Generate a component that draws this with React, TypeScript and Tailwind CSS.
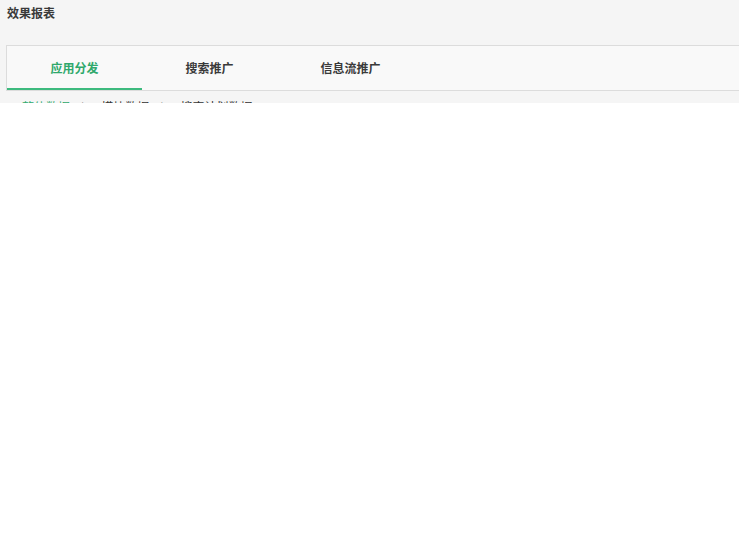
import React from "react";

const tabs = ["应用分发", "搜索推广", "信息流推广"];
const subTabs = ["整体数据", "模块数据", "搜索计划数据"];

export default function App() {
  return (
    <div className="min-h-screen bg-white font-['Noto_Sans_CJK_SC','Noto_Sans',sans-serif] text-[#333]">
      <div className="h-[103px] overflow-hidden bg-[#f5f5f5] pl-[6px]">
        <div className="h-[45px] pt-[6px] pl-[1px] text-[12px] font-bold leading-[14px] text-[#3a3a3a]">效果报表</div>
        <div className="flex h-[46px] border-y border-l border-[#dcdcdc] bg-[#f9f9f9]">
          {tabs.map((t, i) => (
            <div
              key={t}
              className={
                i === 0
                  ? "flex h-full items-center border-b-2 border-[#3dba7e] px-[43.5px] pt-[2px] text-[12px] font-bold text-[#2fa86c]"
                  : "flex h-full items-center border-b-2 border-transparent px-[43.5px] pt-[2px] text-[12px] font-bold text-[#3a3a3a]"
              }
            >
              {t}
            </div>
          ))}
        </div>
        <div className="flex items-center pl-[16px] pt-[8px] text-[12px] leading-[16px]">
          {subTabs.map((s, i) => (
            <React.Fragment key={s}>
              {i > 0 && <span className="pl-[11px] pr-[17px] text-[#999]">|</span>}
              <span className={i === 0 ? "text-[#2fa86c]" : "text-[#333]"}>{s}</span>
            </React.Fragment>
          ))}
        </div>
      </div>
    </div>
  );
}
